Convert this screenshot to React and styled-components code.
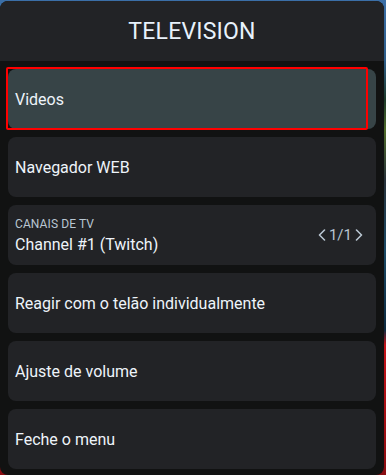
import React from "react";
import styled, { createGlobalStyle } from "styled-components";

const Global = createGlobalStyle`
  html, body { margin: 0; padding: 0; }
  body {
    width: 386px;
    height: 475px;
    overflow: hidden;
    background: linear-gradient(180deg, #3b6fa8 0px, #2d5d8a 60px, #1d3a2a 100px, #4f6b2a 130px, #27313a 180px, #1b4a66 250px, #0d2a40 330px, #c4141a 345px, #8a0d12 475px);
    font-family: Roboto, "Noto Sans", Arial, sans-serif;
  }
`;

const Panel = styled.div`
  margin-top: 1px;
  width: 384px;
  height: 474px;
  background: #111212;
  border-radius: 8px;
  overflow: hidden;
  display: flex;
  flex-direction: column;
`;

const Header = styled.div`
  height: 60px;
  background: #222326;
  display: flex;
  align-items: center;
  justify-content: center;
  color: #e8f2fc;
  font-size: 23px;
  letter-spacing: 0.2px;
`;

const List = styled.div`
  display: flex;
  flex-direction: column;
  gap: 8px;
  padding: 8px 8px 5px 8px;
`;

const Item = styled.div`
  position: relative;
  height: 60px;
  box-sizing: border-box;
  border-radius: 8px;
  background: ${(p) => (p.$active ? "#374447" : "#222326")};
  padding: 0 13px 0 7px;
  display: flex;
  align-items: center;
  justify-content: space-between;
  color: #eef4fa;
  font-size: 16px;
  ${(p) =>
    p.$active &&
    `&::after {
      content: "";
      position: absolute;
      left: -2px;
      top: -2px;
      right: 8px;
      bottom: -1px;
      border: 2px solid #ff0000;
      border-radius: 2px;
    }`}
`;

const Stack = styled.div`
  display: flex;
  flex-direction: column;
  gap: 4px;
`;

const Label = styled.div`
  font-size: 12px;
  color: #b9c6d2;
  letter-spacing: 0.1px;
`;

const Pager = styled.div`
  display: flex;
  align-items: center;
  gap: 3px;
  color: #b9c6d2;
  font-size: 15px;
`;

const Chevron = ({ dir }) => (
  <svg width="8" height="12" viewBox="0 0 8 12">
    <path
      d={dir === "left" ? "M6.5 1 L1.5 6 L6.5 11" : "M1.5 1 L6.5 6 L1.5 11"}
      fill="none"
      stroke="#b9c6d2"
      strokeWidth="1.6"
      strokeLinecap="round"
      strokeLinejoin="round"
    />
  </svg>
);

export default function App() {
  return (
    <>
      <Global />
      <Panel>
        <Header>TELEVISION</Header>
        <List>
          <Item $active>Videos</Item>
          <Item>Navegador WEB</Item>
          <Item>
            <Stack>
              <Label>CANAIS DE TV</Label>
              <span>Channel #1 (Twitch)</span>
            </Stack>
            <Pager>
              <Chevron dir="left" />
              <span>1/1</span>
              <Chevron dir="right" />
            </Pager>
          </Item>
          <Item>Reagir com o telão individualmente</Item>
          <Item>Ajuste de volume</Item>
          <Item>Feche o menu</Item>
        </List>
      </Panel>
    </>
  );
}
